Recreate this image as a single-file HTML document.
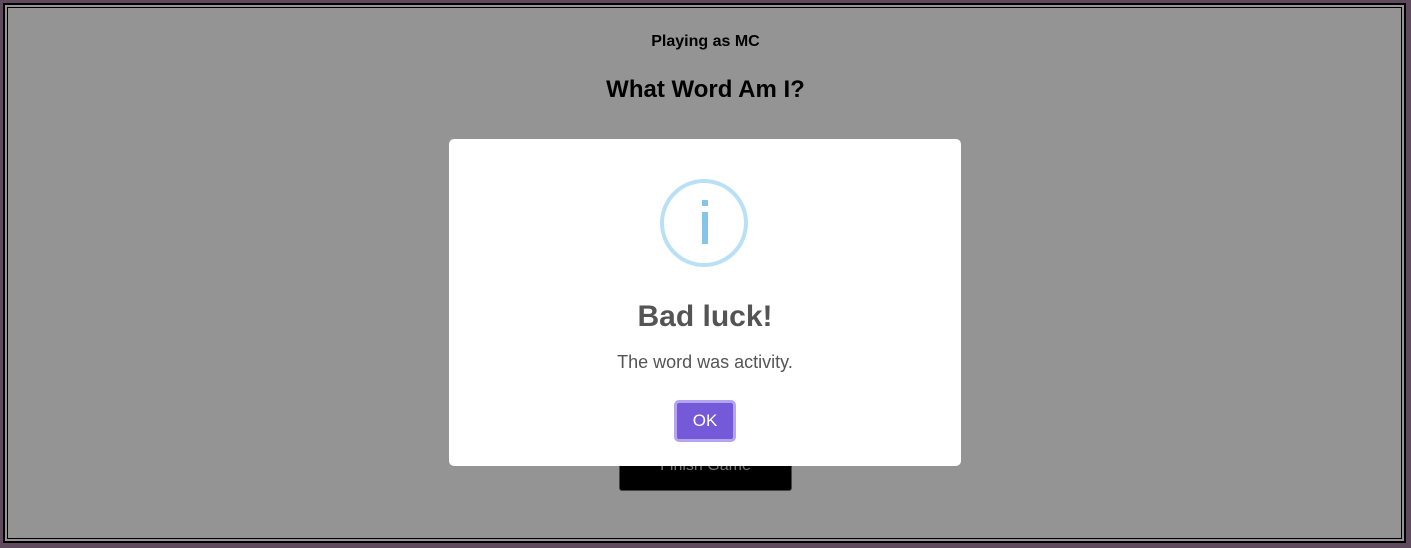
<!DOCTYPE html>
<html><head><style>
html,body{margin:0;padding:0}
body{width:1411px;height:548px;background:#5e4a5c;position:relative;overflow:hidden;font-family:"Liberation Sans",Arial,sans-serif}
.frame{position:absolute;left:3px;top:3px;width:1399px;height:536px;border:2px solid #000;background:#949494}
.inner{position:absolute;left:2px;top:2px;right:2px;bottom:2px;border:1px solid #000}
.t1{position:absolute;left:0;right:0;top:33px;text-align:center;font-weight:bold;font-size:16px;color:#000}
.t2{position:absolute;left:0;right:0;top:76px;text-align:center;font-weight:bold;font-size:24px;color:#000}
.fin{position:absolute;left:619px;top:438px;width:171px;height:51px;background:#000;border:1px solid #444;border-radius:3px;color:#7a7a7a;font-size:16px;text-align:center;line-height:54px}
.dlg{position:absolute;left:449px;top:139px;width:512px;height:327px;background:#fff;border-radius:5px}
.ic{position:absolute;left:211px;top:40px;width:80px;height:80px;border:4px solid #b9e0f5;border-radius:50%}
.dot{position:absolute;left:253px;top:61px;width:6px;height:6px;background:#87c4ea}
.stem{position:absolute;left:253px;top:73px;width:6px;height:32px;background:#87c4ea}
.h{position:absolute;left:0;right:0;top:161px;text-align:center;font-size:30px;font-weight:bold;color:#545454}
.p{position:absolute;left:0;right:0;top:213px;text-align:center;font-size:18px;color:#545454}
.ok{position:absolute;left:225px;top:261px;width:62px;height:42px;box-sizing:border-box;border:3px solid #b5a4f0;border-radius:5px;background:#7459d8;color:#fff;font-size:17px;text-align:center;line-height:36px}
</style></head><body>
<div class="frame"><div class="inner"></div></div>
<div class="t1">Playing as MC</div>
<div class="t2">What Word Am I?</div>
<div class="fin">Finish Game</div>
<div class="dlg">
<div class="ic"></div><div class="dot"></div><div class="stem"></div>
<div class="h">Bad luck!</div>
<div class="p">The word was activity.</div>
<div class="ok">OK</div>
</div>
</body></html>
